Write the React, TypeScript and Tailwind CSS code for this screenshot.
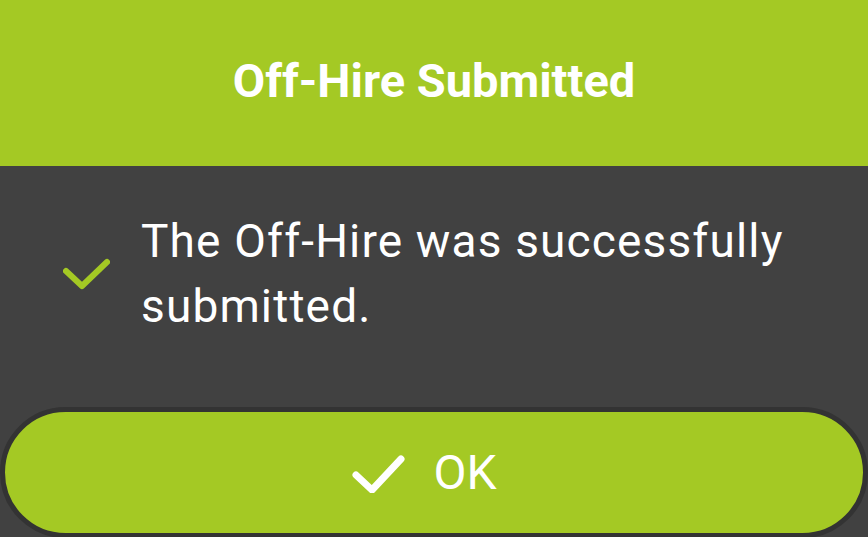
export default function App() {
  return (
    <div
      className="flex h-[537px] w-[868px] flex-col overflow-hidden bg-[#414141]"
      style={{ fontFamily: 'Roboto, "Liberation Sans", sans-serif' }}
    >
      <div className="flex h-[166px] shrink-0 items-start justify-center bg-[#a4c924] pt-[52px]">
        <h1 className="text-[47px] font-bold leading-[58px] text-white">Off-Hire Submitted</h1>
      </div>
      <div className="flex items-center pl-[63px] pt-[43px]">
        <svg width="47" height="33" viewBox="0 0 47 33" className="shrink-0">
          <path
            d="M3 13 L19 28 L44 4"
            fill="none"
            stroke="#a4c924"
            strokeWidth="6"
            strokeLinecap="round"
            strokeLinejoin="round"
          />
        </svg>
        <p className="ml-[31px] text-[46px] leading-[65px] tracking-[1.15px] text-white">
          The Off-Hire was successfully
          <br />
          submitted.
        </p>
      </div>
      <div className="flex-1" />
      <button className="mb-[-1px] flex h-[131px] w-full shrink-0 items-center justify-center gap-[26px] rounded-full border-[5px] border-[#333333] bg-[#a4c924] pr-[20px] text-white">
        <svg width="56" height="40" viewBox="0 0 56 40">
          <path
            d="M5 22 L21 37 L50 6"
            fill="none"
            stroke="white"
            strokeWidth="7"
            strokeLinecap="round"
            strokeLinejoin="round"
          />
        </svg>
        <span className="text-[48px] leading-none">OK</span>
      </button>
    </div>
  );
}
